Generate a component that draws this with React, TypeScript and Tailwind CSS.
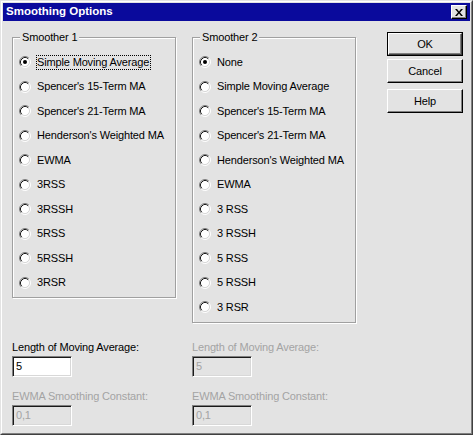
const smoother1 = [
    "Simple Moving Average",
    "Spencer's 15-Term MA",
    "Spencer's 21-Term MA",
    "Henderson's Weighted MA",
    "EWMA",
    "3RSS",
    "3RSSH",
    "5RSS",
    "5RSSH",
    "3RSR",
];

const smoother2 = [
    "None",
    "Simple Moving Average",
    "Spencer's 15-Term MA",
    "Spencer's 21-Term MA",
    "Henderson's Weighted MA",
    "EWMA",
    "3 RSS",
    "3 RSSH",
    "5 RSS",
    "5 RSSH",
    "3 RSR",
];

function RadioDot({ checked }: { checked?: boolean }) {
    return (
        <svg width="12" height="12" viewBox="0 0 12 12" className="shrink-0">
            <circle cx="6" cy="6" r="4.5" fill="#ffffff" />
            <path d="M2.11 9.89 A5.5 5.5 0 0 1 9.89 2.11" fill="none" stroke="#808080" strokeWidth="1" />
            <path d="M9.89 2.11 A5.5 5.5 0 0 1 2.11 9.89" fill="none" stroke="#ffffff" strokeWidth="1" />
            <path d="M2.82 9.18 A4.5 4.5 0 0 1 9.18 2.82" fill="none" stroke="#1a1a1a" strokeWidth="1" />
            <path d="M9.18 2.82 A4.5 4.5 0 0 1 2.82 9.18" fill="none" stroke="#d8d8d8" strokeWidth="1" />
            {checked && <circle cx="6" cy="6" r="2" fill="#000000" />}
        </svg>
    );
}

function RadioGroup({ title, items, focused }: { title: string; items: string[]; focused?: boolean }) {
    return (
        <div className="relative w-[164px] border border-[#a0a0a0] shadow-[inset_1px_1px_0_#ffffff,1px_1px_0_#ffffff] px-[6px] pt-[12px] pb-[2px]">
            {/* group caption sits over the top line */}
            <span className="absolute -top-[7px] left-[7px] px-[2px] bg-[#e3e3e3] leading-[13px]">{title}</span>
            <div className="flex flex-col">
                {items.map((label, i) => (
                    <div key={label} className="h-[24.5px] flex items-center gap-[5px]">
                        <RadioDot checked={i === 0} />
                        <span
                            className={
                                i === 0 && focused
                                    ? "border border-dotted border-black leading-[13px] pr-px"
                                    : "border border-transparent leading-[13px] pr-px"
                            }
                        >
                            {label}
                        </span>
                    </div>
                ))}
            </div>
        </div>
    );
}

function Field({ label, value, disabled }: { label: string; value: string; disabled?: boolean }) {
    return (
        <div className="flex flex-col">
            <span className={disabled ? "leading-[13px] text-[#a3a3a3]" : "leading-[13px]"}>{label}</span>
            <div
                className={
                    "mt-[2px] w-[60px] h-[21px] border border-t-[#808080] border-l-[#808080] border-r-white border-b-white shadow-[inset_1px_1px_0_#1a1a1a,inset_-1px_-1px_0_#d8d8d8] pl-[3px] flex items-center " +
                    (disabled ? "bg-[#e3e3e3] text-[#a3a3a3]" : "bg-white")
                }
            >
                {value}
            </div>
        </div>
    );
}

function DialogButton({ label, isDefault }: { label: string; isDefault?: boolean }) {
    if (isDefault) {
        return (
            <div className="w-[76px] h-[24px] border border-black">
                <div className="h-full border border-t-white border-l-white border-r-[#404040] border-b-[#404040] shadow-[inset_-1px_-1px_0_#808080] flex items-center justify-center">
                    {label}
                </div>
            </div>
        );
    }
    return (
        <div className="w-[76px] h-[24px] border border-t-white border-l-white border-r-black border-b-black shadow-[inset_-1px_-1px_0_#808080] flex items-center justify-center">
            {label}
        </div>
    );
}

export default function App() {
    return (
        <div className="w-[473px] h-[435px] bg-[#e3e3e3] border border-t-[#e3e3e3] border-l-[#e3e3e3] border-r-[#404040] border-b-[#404040] font-['Liberation_Sans',Arial,sans-serif] text-[11px] tracking-[-0.15px] text-black">
            <div className="h-full border border-t-white border-l-white border-r-[#808080] border-b-[#808080] p-px flex flex-col">
                {/* Title bar */}
                <div className="h-[18px] bg-[#0a0a9c] flex items-center justify-between pl-[3px] pr-[3px]">
                    <span className="text-white font-bold text-[11.5px] tracking-[0px]">Smoothing Options</span>
                    <div className="w-[16px] h-[14px] bg-[#e3e3e3] border border-t-white border-l-white border-r-black border-b-black shadow-[inset_-1px_-1px_0_#808080] flex items-center justify-center">
                        <svg width="8" height="7" viewBox="0 0 8 7">
                            <path d="M0 0h2l2 2.5L6 0h2L5 3.5 8 7H6L4 4.5 2 7H0l3-3.5z" fill="#000" />
                        </svg>
                    </div>
                </div>

                {/* Body */}
                <div className="flex-1 pl-[9px] pt-[11px]">
                    <div className="flex items-start">
                        <div className="mt-[5px]">
                            <RadioGroup title="Smoother 1" items={smoother1} focused />
                        </div>
                        <div className="mt-[5px] ml-[16px]">
                            <RadioGroup title="Smoother 2" items={smoother2} />
                        </div>
                        <div className="ml-[31px] flex flex-col">
                            <DialogButton label="OK" isDefault />
                            <div className="mt-[3px]">
                                <DialogButton label="Cancel" />
                            </div>
                            <div className="mt-[6px]">
                                <DialogButton label="Help" />
                            </div>
                        </div>
                    </div>

                    <div className="flex mt-[18px]">
                        <div className="w-[180px] flex flex-col gap-[13px]">
                            <Field label="Length of Moving Average:" value="5" />
                            <Field label="EWMA Smoothing Constant:" value="0,1" disabled />
                        </div>
                        <div className="flex flex-col gap-[13px]">
                            <Field label="Length of Moving Average:" value="5" disabled />
                            <Field label="EWMA Smoothing Constant:" value="0,1" disabled />
                        </div>
                    </div>
                </div>
            </div>
        </div>
    );
}
